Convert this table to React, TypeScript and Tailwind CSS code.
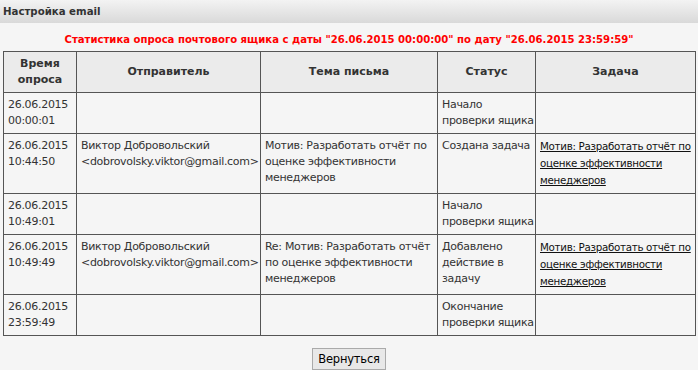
import React from 'react'

type Row = {
  time: string[]
  sender?: string[]
  subject?: string[]
  status: string[]
  task?: string[]
}

const task = ['Мотив: Разработать отчёт по', 'оценке эффективности', 'менеджеров']
const sender = ['Виктор Добровольский', '<dobrovolsky.viktor@gmail.com>']

const rows: Row[] = [
  { time: ['26.06.2015', '00:00:01'], status: ['Начало', 'проверки ящика'] },
  {
    time: ['26.06.2015', '10:44:50'],
    sender,
    subject: ['Мотив: Разработать отчёт по', 'оценке эффективности', 'менеджеров'],
    status: ['Создана задача'],
    task,
  },
  { time: ['26.06.2015', '10:49:01'], status: ['Начало', 'проверки ящика'] },
  {
    time: ['26.06.2015', '10:49:49'],
    sender,
    subject: ['Re: Мотив: Разработать отчёт', 'по оценке эффективности', 'менеджеров'],
    status: ['Добавлено', 'действие в', 'задачу'],
    task,
  },
  { time: ['26.06.2015', '23:59:49'], status: ['Окончание', 'проверки ящика'] },
]

const th = 'border border-[#555] px-1 font-bold text-center'
const td = 'border border-[#555] pl-1 pr-0 py-1 align-top whitespace-nowrap overflow-hidden'

function Lines({ lines }: { lines?: string[] }) {
  if (!lines) return null
  return (
    <>
      {lines.map((l, i) => (
        <div key={i}>{l}</div>
      ))}
    </>
  )
}

export default function App() {
  return (
    <div className="min-h-[370px] bg-[#f5f5f5] font-['DejaVu_Sans',sans-serif] text-[11px] leading-4 text-[#333]">
      <div className="flex h-[23px] items-center bg-gradient-to-b from-[#f3f3f3] to-[#d9d9d9] px-[3px] text-[10.2px] font-bold">
        Настройка email
      </div>
      <div className="pt-[9px] pb-[3px] text-center text-[10.1px] font-bold text-[#ff0000]">
        Статистика опроса почтового ящика с даты "26.06.2015 00:00:00" по дату "26.06.2015 23:59:59"
      </div>
      <div className="px-[3px]">
        <table className="w-[692px] table-fixed border-collapse">
          <colgroup>
            <col className="w-[73px]" />
            <col className="w-[184px]" />
            <col className="w-[177px]" />
            <col className="w-[98px]" />
            <col className="w-[160px]" />
          </colgroup>
          <thead>
            <tr className="h-[41px] bg-[#ebebeb]">
              <th className={th}>
                Время
                <br />
                опроса
              </th>
              <th className={th}>Отправитель</th>
              <th className={th}>Тема письма</th>
              <th className={th}>Статус</th>
              <th className={th}>Задача</th>
            </tr>
          </thead>
          <tbody className="tracking-[-0.3px]">
            {rows.map((r, i) => (
              <tr key={i}>
                <td className={td}>
                  <Lines lines={r.time} />
                </td>
                <td className={td}>
                  <Lines lines={r.sender} />
                </td>
                <td className={td}>
                  <Lines lines={r.subject} />
                </td>
                <td className={td}>
                  <Lines lines={r.status} />
                </td>
                <td className={td}>
                  {r.task &&
                    r.task.map((l, j) => (
                      <div key={j}>
                        <a href="#" className="text-[10.3px] text-[#111] underline">
                          {l}
                        </a>
                      </div>
                    ))}
                </td>
              </tr>
            ))}
          </tbody>
        </table>
      </div>
      <div className="flex justify-center pt-[12px]">
        <button className="h-[22px] border border-[#aaa] bg-[#e8e8e8] px-[5px] font-['DejaVu_Sans',sans-serif] text-[11.5px] tracking-[-0.2px] text-black">
          Вернуться
        </button>
      </div>
    </div>
  )
}
